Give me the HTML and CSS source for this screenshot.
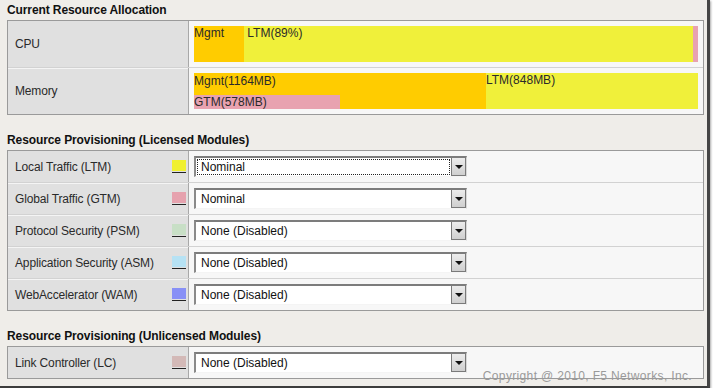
FILE: index.html
```html
<!DOCTYPE html>
<html lang="en">
<head>
  <meta charset="UTF-8">
  <title>Resource Provisioning</title>
  <link rel="stylesheet" href="styles.css">
</head>
<body>
  <div class="window">
    <h2>Current Resource Allocation</h2>
    <div class="panel">
      <div class="row tall">
        <div class="label">CPU</div>
        <div class="value">
          <div class="bar">
            <div class="seg mgmt" style="width:50px">Mgmt</div>
            <div class="seg ltm grow">&nbsp;LTM(89%)</div>
            <div class="seg gtm" style="width:5px"></div>
          </div>
        </div>
      </div>
      <div class="row tall">
        <div class="label">Memory</div>
        <div class="value">
          <div class="bar">
            <div class="seg mgmt stack" style="width:292px">
              <span class="grow">Mgmt(1164MB)</span>
              <span class="gtm sub" style="width:146px">GTM(578MB)</span>
            </div>
            <div class="seg ltm grow">LTM(848MB)</div>
          </div>
        </div>
      </div>
    </div>

    <h2>Resource Provisioning (Licensed Modules)</h2>
    <div class="panel">
      <div class="row">
        <div class="label">Local Traffic (LTM) <span class="swatch sw-ltm"></span></div>
        <div class="value">
          <div class="select"><span class="text focused">Nominal</span><span class="drop"></span></div>
        </div>
      </div>
      <div class="row">
        <div class="label">Global Traffic (GTM) <span class="swatch sw-gtm"></span></div>
        <div class="value">
          <div class="select"><span class="text">Nominal</span><span class="drop"></span></div>
        </div>
      </div>
      <div class="row">
        <div class="label">Protocol Security (PSM) <span class="swatch sw-psm"></span></div>
        <div class="value">
          <div class="select"><span class="text">None (Disabled)</span><span class="drop"></span></div>
        </div>
      </div>
      <div class="row">
        <div class="label">Application Security (ASM) <span class="swatch sw-asm"></span></div>
        <div class="value">
          <div class="select"><span class="text">None (Disabled)</span><span class="drop"></span></div>
        </div>
      </div>
      <div class="row">
        <div class="label">WebAccelerator (WAM) <span class="swatch sw-wam"></span></div>
        <div class="value">
          <div class="select"><span class="text">None (Disabled)</span><span class="drop"></span></div>
        </div>
      </div>
    </div>

    <h2>Resource Provisioning (Unlicensed Modules)</h2>
    <div class="panel">
      <div class="row">
        <div class="label">Link Controller (LC) <span class="swatch sw-lc"></span></div>
        <div class="value">
          <div class="select"><span class="text">None (Disabled)</span><span class="drop"></span></div>
        </div>
      </div>
    </div>

    <div class="copyright">Copyright @ 2010, F5 Networks, Inc.</div>
  </div>
</body>
</html>
```

FILE: styles.css
```css
:root {
  --page: #efede9;
  --label-bg: #e0e0e0;
  --cell-bg: #f7f7f7;
  --border: #9a9a9a;
  --sep: #d2d2d2;
  --orange: #ffcc00;
  --yellow: #f0f03a;
  --pink: #e8a2b0;
}

html, body {
  margin: 0;
  padding: 0;
}

body {
  background: #fff;
  font-family: "Liberation Sans", Arial, sans-serif;
  font-size: 12px;
  color: #2a2a2a;
}

.window {
  position: relative;
  width: 700px;
  height: 386px;
  padding-left: 7px;
  background: var(--page);
  border-right: 3px solid #454545;
  border-bottom: 2px solid #3c3c3c;
  box-shadow: 1px 1px 2px #aaa;
}

h2 {
  margin: 15px 0 0;
  height: 20px;
  line-height: 20px;
  font-size: 12px;
  letter-spacing: -0.1px;
  font-weight: bold;
  color: #111;
}

h2:first-child {
  margin-top: 0;
}

.panel {
  width: 697px;
  box-sizing: border-box;
  border: 1px solid var(--border);
  background: var(--cell-bg);
}

.row {
  display: flex;
  height: 31px;
}

.row + .row {
  border-top: 1px solid var(--sep);
}

.row.tall {
  height: 46px;
}

.label {
  width: 171px;
  flex: none;
  display: flex;
  align-items: center;
  justify-content: space-between;
  padding: 0 2px 0 7px;
  background: var(--label-bg);
  border-right: 1px solid #a8a8a8;
  letter-spacing: -0.15px;
}

.row + .row .label {
  box-shadow: inset 0 1px 0 #f4f4f4;
}

.value {
  flex: 1;
  padding: 5px;
}

/* allocation bars */
.bar {
  display: flex;
  height: 36px;
  line-height: 14px;
}

.seg {
  flex: none;
  white-space: nowrap;
}

.grow {
  flex: 1;
}

.mgmt { background: var(--orange); }
.ltm { background: var(--yellow); }
.gtm { background: var(--pink); }

.stack {
  display: flex;
  flex-direction: column;
  padding-top: 1px;
  box-sizing: border-box;
}

.sub {
  height: 14px;
}

/* swatches */
.swatch {
  width: 14px;
  height: 12px;
  border-bottom: 1px solid #222;
  box-shadow: inset 0 -1px 0 var(--label-bg);
}

.sw-ltm { background: #f0f030; }
.sw-gtm { background: #e6a2ae; }
.sw-psm { background: #c8dfc6; }
.sw-asm { background: #b6e2f4; }
.sw-wam { background: #8890f6; }
.sw-lc  { background: #d3b9b7; }

/* classic drop-down */
.select {
  display: flex;
  width: 273px;
  height: 21px;
  box-sizing: border-box;
  background: #fff;
  border-top: 2px solid #7c7c7c;
  border-left: 2px solid #8a8a8a;
  border-bottom: 1px solid #f4f4f4;
  border-right: 1px solid #d8d8d8;
  font-size: 12px;
}

.text {
  flex: 1;
  margin: 1px;
  padding-left: 3px;
  line-height: 15px;
  color: #111;
  border: 1px solid transparent;
}

.text.focused {
  border: 1px dotted #222;
}

.drop {
  position: relative;
  width: 15px;
  flex: none;
  background: linear-gradient(#ececec, #cfcfcf);
  border: 1px solid #7a7a7a;
  border-top: none;
  box-sizing: border-box;
}

.drop::after {
  content: "";
  position: absolute;
  left: 3px;
  top: 7px;
  border-left: 4px solid transparent;
  border-right: 4px solid transparent;
  border-top: 4px solid #111;
}

.copyright {
  position: absolute;
  right: 15px;
  top: 369px;
  font-size: 12px;
  letter-spacing: 0.35px;
  color: #9a9a9a;
}
```
